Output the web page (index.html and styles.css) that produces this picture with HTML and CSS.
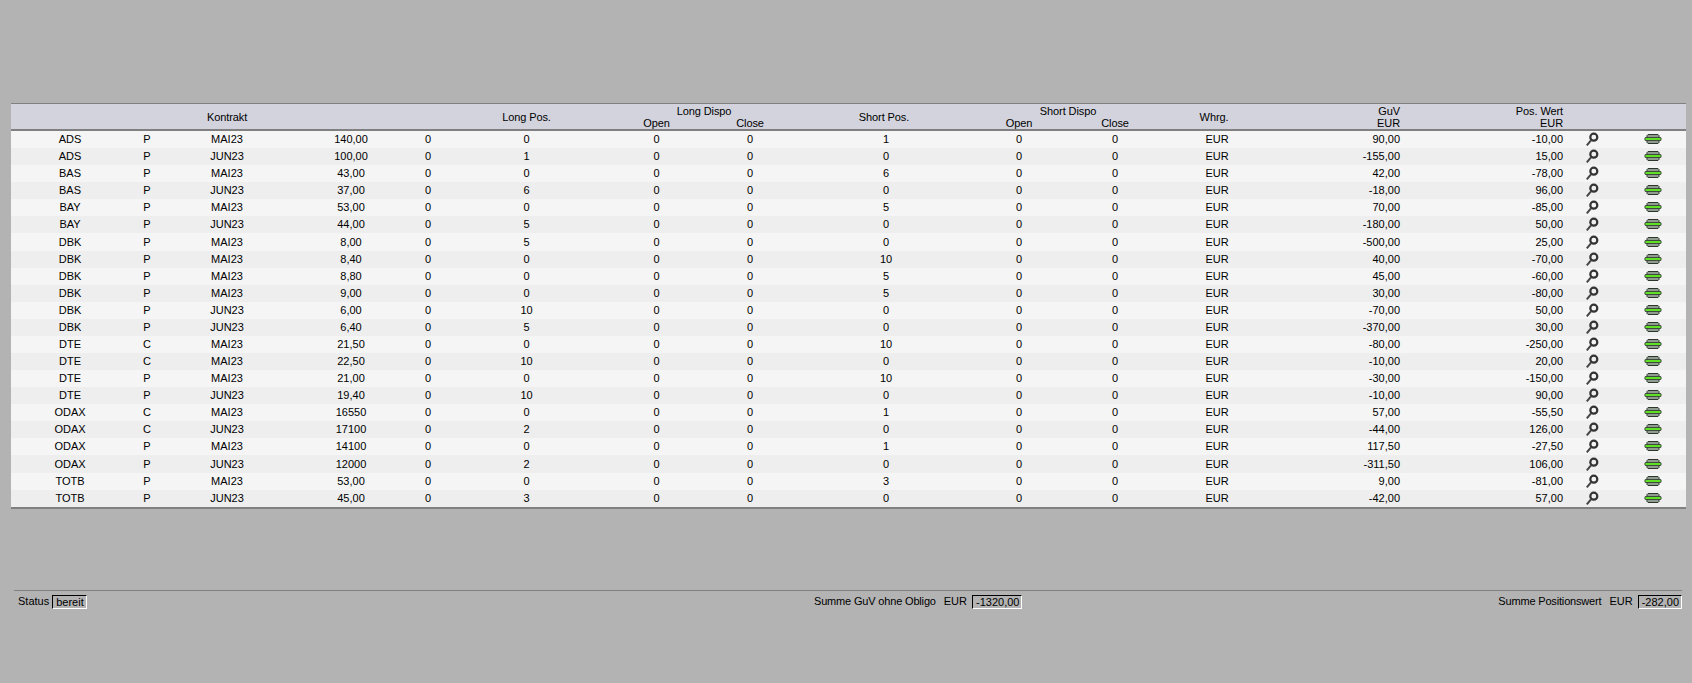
FILE: index.html
```html
<!DOCTYPE html>
<html lang="de">
<head>
<meta charset="utf-8">
<title>Positionen</title>
<link rel="stylesheet" href="styles.css">
</head>
<body>
<svg class="defs" width="0" height="0" aria-hidden="true">
  <symbol id="lens" viewBox="0 0 14 15">
    <circle cx="8.800" cy="5.200" r="3.500" fill="none" stroke="#333" stroke-width="2.200"/>
    <path d="M6 8.400 1.800 13.400" fill="none" stroke="#444" stroke-width="2"/>
  </symbol>
  <symbol id="pill" viewBox="0 0 18 10">
    <path d="M3 1.500 4 .5h10l1 1v7l-1 1H4l-1-1z" fill="#8f9c8f" stroke="#2d352d"/>
    <path d="M1.500 3h15l1 1v2l-1 1h-15l-1-1V4z" fill="#3d4a3d"/>
    <rect x="1.500" y="4" width="15" height="2" fill="#5fe025"/>
  </symbol>
</svg>
<main class="page">
  <table class="grid">
    <colgroup>
      <col class="c1"><col class="c2"><col class="c3"><col class="c4"><col class="c5"><col class="c6"><col class="c7"><col class="c8"><col class="c9"><col class="c10"><col class="c11"><col class="c12"><col class="c13"><col class="c14"><col class="c15"><col class="c16">
    </colgroup>
    <thead>
      <tr class="head1">
        <th colspan="5" rowspan="2">Kontrakt</th>
        <th rowspan="2">Long Pos.</th>
        <th colspan="2" class="ld">Long Dispo</th>
        <th rowspan="2" class="sp">Short Pos.</th>
        <th colspan="2" class="sd">Short Dispo</th>
        <th rowspan="2">Whrg.</th>
        <th class="r">GuV</th>
        <th class="r">Pos. Wert</th>
        <th rowspan="2"></th>
        <th rowspan="2"></th>
      </tr>
      <tr class="head2">
        <th>Open</th><th>Close</th>
        <th>Open</th><th>Close</th>
        <th class="r">EUR</th><th class="r">EUR</th>
      </tr>
    </thead>
    <tbody id="rows">
      <tr><td>ADS</td><td>P</td><td>MAI23</td><td>140,00</td><td>0</td><td>0</td><td>0</td><td>0</td><td>1</td><td>0</td><td>0</td><td>EUR</td><td class="r">90,00</td><td class="r">-10,00</td><td><svg class="lens"><use href="#lens"/></svg></td><td><svg class="pill"><use href="#pill"/></svg></td></tr>
      <tr><td>ADS</td><td>P</td><td>JUN23</td><td>100,00</td><td>0</td><td>1</td><td>0</td><td>0</td><td>0</td><td>0</td><td>0</td><td>EUR</td><td class="r">-155,00</td><td class="r">15,00</td><td><svg class="lens"><use href="#lens"/></svg></td><td><svg class="pill"><use href="#pill"/></svg></td></tr>
      <tr><td>BAS</td><td>P</td><td>MAI23</td><td>43,00</td><td>0</td><td>0</td><td>0</td><td>0</td><td>6</td><td>0</td><td>0</td><td>EUR</td><td class="r">42,00</td><td class="r">-78,00</td><td><svg class="lens"><use href="#lens"/></svg></td><td><svg class="pill"><use href="#pill"/></svg></td></tr>
      <tr><td>BAS</td><td>P</td><td>JUN23</td><td>37,00</td><td>0</td><td>6</td><td>0</td><td>0</td><td>0</td><td>0</td><td>0</td><td>EUR</td><td class="r">-18,00</td><td class="r">96,00</td><td><svg class="lens"><use href="#lens"/></svg></td><td><svg class="pill"><use href="#pill"/></svg></td></tr>
      <tr><td>BAY</td><td>P</td><td>MAI23</td><td>53,00</td><td>0</td><td>0</td><td>0</td><td>0</td><td>5</td><td>0</td><td>0</td><td>EUR</td><td class="r">70,00</td><td class="r">-85,00</td><td><svg class="lens"><use href="#lens"/></svg></td><td><svg class="pill"><use href="#pill"/></svg></td></tr>
      <tr><td>BAY</td><td>P</td><td>JUN23</td><td>44,00</td><td>0</td><td>5</td><td>0</td><td>0</td><td>0</td><td>0</td><td>0</td><td>EUR</td><td class="r">-180,00</td><td class="r">50,00</td><td><svg class="lens"><use href="#lens"/></svg></td><td><svg class="pill"><use href="#pill"/></svg></td></tr>
      <tr><td>DBK</td><td>P</td><td>MAI23</td><td>8,00</td><td>0</td><td>5</td><td>0</td><td>0</td><td>0</td><td>0</td><td>0</td><td>EUR</td><td class="r">-500,00</td><td class="r">25,00</td><td><svg class="lens"><use href="#lens"/></svg></td><td><svg class="pill"><use href="#pill"/></svg></td></tr>
      <tr><td>DBK</td><td>P</td><td>MAI23</td><td>8,40</td><td>0</td><td>0</td><td>0</td><td>0</td><td>10</td><td>0</td><td>0</td><td>EUR</td><td class="r">40,00</td><td class="r">-70,00</td><td><svg class="lens"><use href="#lens"/></svg></td><td><svg class="pill"><use href="#pill"/></svg></td></tr>
      <tr><td>DBK</td><td>P</td><td>MAI23</td><td>8,80</td><td>0</td><td>0</td><td>0</td><td>0</td><td>5</td><td>0</td><td>0</td><td>EUR</td><td class="r">45,00</td><td class="r">-60,00</td><td><svg class="lens"><use href="#lens"/></svg></td><td><svg class="pill"><use href="#pill"/></svg></td></tr>
      <tr><td>DBK</td><td>P</td><td>MAI23</td><td>9,00</td><td>0</td><td>0</td><td>0</td><td>0</td><td>5</td><td>0</td><td>0</td><td>EUR</td><td class="r">30,00</td><td class="r">-80,00</td><td><svg class="lens"><use href="#lens"/></svg></td><td><svg class="pill"><use href="#pill"/></svg></td></tr>
      <tr><td>DBK</td><td>P</td><td>JUN23</td><td>6,00</td><td>0</td><td>10</td><td>0</td><td>0</td><td>0</td><td>0</td><td>0</td><td>EUR</td><td class="r">-70,00</td><td class="r">50,00</td><td><svg class="lens"><use href="#lens"/></svg></td><td><svg class="pill"><use href="#pill"/></svg></td></tr>
      <tr><td>DBK</td><td>P</td><td>JUN23</td><td>6,40</td><td>0</td><td>5</td><td>0</td><td>0</td><td>0</td><td>0</td><td>0</td><td>EUR</td><td class="r">-370,00</td><td class="r">30,00</td><td><svg class="lens"><use href="#lens"/></svg></td><td><svg class="pill"><use href="#pill"/></svg></td></tr>
      <tr><td>DTE</td><td>C</td><td>MAI23</td><td>21,50</td><td>0</td><td>0</td><td>0</td><td>0</td><td>10</td><td>0</td><td>0</td><td>EUR</td><td class="r">-80,00</td><td class="r">-250,00</td><td><svg class="lens"><use href="#lens"/></svg></td><td><svg class="pill"><use href="#pill"/></svg></td></tr>
      <tr><td>DTE</td><td>C</td><td>MAI23</td><td>22,50</td><td>0</td><td>10</td><td>0</td><td>0</td><td>0</td><td>0</td><td>0</td><td>EUR</td><td class="r">-10,00</td><td class="r">20,00</td><td><svg class="lens"><use href="#lens"/></svg></td><td><svg class="pill"><use href="#pill"/></svg></td></tr>
      <tr><td>DTE</td><td>P</td><td>MAI23</td><td>21,00</td><td>0</td><td>0</td><td>0</td><td>0</td><td>10</td><td>0</td><td>0</td><td>EUR</td><td class="r">-30,00</td><td class="r">-150,00</td><td><svg class="lens"><use href="#lens"/></svg></td><td><svg class="pill"><use href="#pill"/></svg></td></tr>
      <tr><td>DTE</td><td>P</td><td>JUN23</td><td>19,40</td><td>0</td><td>10</td><td>0</td><td>0</td><td>0</td><td>0</td><td>0</td><td>EUR</td><td class="r">-10,00</td><td class="r">90,00</td><td><svg class="lens"><use href="#lens"/></svg></td><td><svg class="pill"><use href="#pill"/></svg></td></tr>
      <tr><td>ODAX</td><td>C</td><td>MAI23</td><td>16550</td><td>0</td><td>0</td><td>0</td><td>0</td><td>1</td><td>0</td><td>0</td><td>EUR</td><td class="r">57,00</td><td class="r">-55,50</td><td><svg class="lens"><use href="#lens"/></svg></td><td><svg class="pill"><use href="#pill"/></svg></td></tr>
      <tr><td>ODAX</td><td>C</td><td>JUN23</td><td>17100</td><td>0</td><td>2</td><td>0</td><td>0</td><td>0</td><td>0</td><td>0</td><td>EUR</td><td class="r">-44,00</td><td class="r">126,00</td><td><svg class="lens"><use href="#lens"/></svg></td><td><svg class="pill"><use href="#pill"/></svg></td></tr>
      <tr><td>ODAX</td><td>P</td><td>MAI23</td><td>14100</td><td>0</td><td>0</td><td>0</td><td>0</td><td>1</td><td>0</td><td>0</td><td>EUR</td><td class="r">117,50</td><td class="r">-27,50</td><td><svg class="lens"><use href="#lens"/></svg></td><td><svg class="pill"><use href="#pill"/></svg></td></tr>
      <tr><td>ODAX</td><td>P</td><td>JUN23</td><td>12000</td><td>0</td><td>2</td><td>0</td><td>0</td><td>0</td><td>0</td><td>0</td><td>EUR</td><td class="r">-311,50</td><td class="r">106,00</td><td><svg class="lens"><use href="#lens"/></svg></td><td><svg class="pill"><use href="#pill"/></svg></td></tr>
      <tr><td>TOTB</td><td>P</td><td>MAI23</td><td>53,00</td><td>0</td><td>0</td><td>0</td><td>0</td><td>3</td><td>0</td><td>0</td><td>EUR</td><td class="r">9,00</td><td class="r">-81,00</td><td><svg class="lens"><use href="#lens"/></svg></td><td><svg class="pill"><use href="#pill"/></svg></td></tr>
      <tr><td>TOTB</td><td>P</td><td>JUN23</td><td>45,00</td><td>0</td><td>3</td><td>0</td><td>0</td><td>0</td><td>0</td><td>0</td><td>EUR</td><td class="r">-42,00</td><td class="r">57,00</td><td><svg class="lens"><use href="#lens"/></svg></td><td><svg class="pill"><use href="#pill"/></svg></td></tr>
    </tbody>
  </table>
  <footer class="status">
    <div class="sgroup first"><span>Status</span><output class="box">bereit</output></div>
    <div class="sgroup"><span class="tight">Summe GuV ohne Obligo</span><span>EUR</span><output class="box">-1320,00</output></div>
    <div class="sgroup last"><span class="tight">Summe Positionswert</span><span>EUR</span><output class="box">-282,00</output></div>
  </footer>
</main>
</body>
</html>
```
FILE: styles.css
```css
* { box-sizing: border-box; }
html, body { margin: 0; height: 100%; }
body {
  background: #b3b3b3;
  color: #000;
  font: 11px/13px "Liberation Sans", Arial, sans-serif;
}
.defs { display: block; height: 0; }
.page { padding: 103px 6px 0 11px; }
.grid {
  width: 1675px;
  table-layout: fixed;
  border-collapse: separate;
  border-spacing: 0;
  border-bottom: 2px solid #808080;
}
.c1 { width: 118px; } .c2 { width: 36px; } .c3 { width: 124px; } .c4 { width: 124px; }
.c5 { width: 30px; } .c6 { width: 167px; } .c7 { width: 93px; } .c8 { width: 94px; }
.c9 { width: 178px; } .c10 { width: 88px; } .c11 { width: 104px; } .c12 { width: 94px; }
.c13 { width: 141px; } .c14 { width: 163px; } .c15 { width: 54px; } .c16 { width: 67px; }
th {
  background: #d2d3dd;
  font-weight: normal;
  letter-spacing: -0.1px;
  line-height: 12px;
  padding: 0;
  text-align: center;
  vertical-align: middle;
}
.head1 th { height: 14px; border-top: 1px solid #808080; }
.head2 th { height: 13px; border-bottom: 2px solid #808080; vertical-align: top; }
.head1 th[rowspan] { border-bottom: 2px solid #808080; }
.ld { padding-left: 1px; }
.sd { padding-right: 6px; }
.sp { padding-right: 4px; }
td { padding: 0; height: 17.09px; text-align: center; vertical-align: middle; }
th.r, td.r { text-align: right; padding-right: 2px; }
tbody td:nth-child(12) { padding-left: 6px; }
tbody tr:nth-child(odd) { background: #f5f5f5; }
tbody tr:nth-child(even) { background: #eeeeee; }
svg.lens { display: block; width: 14px; height: 15px; margin: 0 auto; }
svg.pill { display: block; width: 18px; height: 10px; margin: -1px auto 0; }
.status {
  display: flex;
  align-items: center;
  margin: 81px 4px 0 3px;
  padding: 4px 0 0 4px;
  border-top: 1px solid #808080;
}
.sgroup { display: flex; align-items: center; gap: 8px; }
.first { width: 796px; gap: 3px; }
.last { margin-left: auto; }
.tight { letter-spacing: -0.17px; }
.box {
  display: block;
  height: 14px;
  line-height: 12px;
  margin-left: -3px;
  padding: 0 2px 0 3px;
  border: 1px solid;
  border-color: #000 #fff #fff #000;
}
.first .box { margin-left: 0; }
```
